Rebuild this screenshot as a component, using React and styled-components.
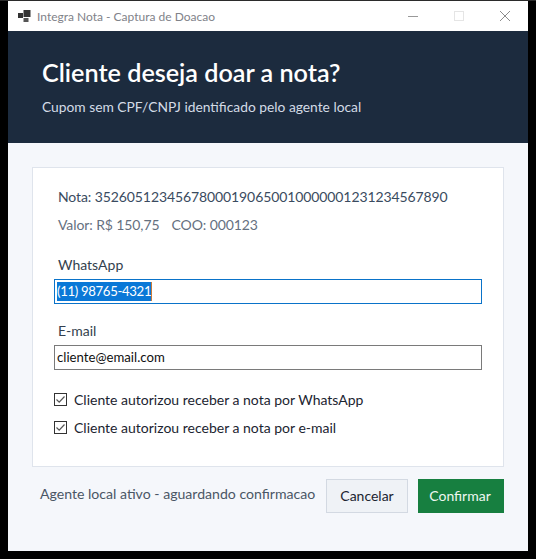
import React from 'react';
import styled, { createGlobalStyle } from 'styled-components';

const GlobalStyle = createGlobalStyle`
  html, body {
    margin: 0;
    padding: 0;
    background: #000;
  }
  body {
    font-family: Lato, "Noto Sans", sans-serif;
  }
`;

const Backdrop = styled.div`
  width: 536px;
  height: 559px;
  box-sizing: border-box;
  padding: 0 8px 8px;
  background: #000;
  border-top: 1px solid #2b2b2b;
  overflow: hidden;
`;

const Win = styled.div`
  width: 520px;
  height: 550px;
  display: flex;
  flex-direction: column;
  background: #f5f7fb;
`;

const TitleBar = styled.div`
  height: 30px;
  flex: none;
  display: flex;
  align-items: center;
  padding-left: 10px;
  background: #fff;
`;

const AppIcon = styled.svg`
  width: 13px;
  height: 12px;
  margin-right: 6px;
`;

const AppTitle = styled.span`
  flex: 1;
  font-size: 12px;
  color: #7f8289;
`;

const WinButton = styled.div`
  width: 46px;
  height: 30px;
  display: flex;
  align-items: center;
  justify-content: center;
`;

const Header = styled.header`
  height: 112px;
  flex: none;
  box-sizing: border-box;
  padding: 25px 34px 0;
  background: #1c2b3e;
`;

const Title = styled.h1`
  margin: 0;
  font-size: 25.2px;
  line-height: 32px;
  font-weight: 600;
  color: #fff;
`;

const Subtitle = styled.p`
  margin: 10px 0 0;
  font-size: 13.8px;
  line-height: 18px;
  color: #d3dbe6;
`;

const Body = styled.main`
  flex: 1;
  box-sizing: border-box;
  padding: 24px 24px 0;
`;

const Card = styled.section`
  height: 300px;
  box-sizing: border-box;
  padding: 20px 21px 0;
  background: #fff;
  border: 1px solid #dfe4ec;
`;

const NoteLine = styled.div`
  padding-left: 4px;
  font-size: 14px;
  letter-spacing: -0.1px;
  line-height: 18px;
  color: #3a4b60;
  white-space: nowrap;
`;

const ValueLine = styled(NoteLine)`
  margin-top: 10px;
  color: #65707f;
`;

const Coo = styled.span`
  margin-left: 12px;
`;

const FieldLabel = styled.label`
  display: block;
  margin-top: ${(p) => p.$gap}px;
  padding-left: 4px;
  font-size: 14px;
  line-height: 18px;
  color: #333f4e;
`;

const Field = styled.div`
  width: 428px;
  height: 25px;
  margin-top: 5px;
  box-sizing: border-box;
  display: flex;
  align-items: center;
  padding: 0 0 1px 2px;
  background: #fff;
  border: 1px solid ${(p) => (p.$focused ? '#0a73c9' : '#7a7a7a')};
  font-size: 13.2px;
  color: #111;
`;

const Selected = styled.span`
  height: 19px;
  line-height: 19px;
  letter-spacing: -0.35px;
  background: #0a78d7;
  color: #fff;
  box-shadow: 1px 0 0 #c77a3a;
`;

const Checks = styled.div`
  display: flex;
  flex-direction: column;
  gap: 10px;
  margin-top: 20px;
`;

const CheckRow = styled.label`
  display: flex;
  align-items: center;
  gap: 7px;
  height: 18px;
  font-size: 14px;
  color: #1b2430;
`;

const Box = styled.svg`
  width: 13px;
  height: 13px;
  flex: none;
`;

const Footer = styled.footer`
  display: flex;
  align-items: center;
  height: 34px;
  margin-top: 12px;
`;

const Status = styled.span`
  flex: 1;
  padding-left: 8px;
  margin-top: -6px;
  font-size: 14.1px;
  color: #4a5665;
  white-space: nowrap;
`;

const CancelButton = styled.button`
  width: 82px;
  height: 34px;
  padding: 0 0 2px;
  font: inherit;
  font-size: 14px;
  color: #1b2430;
  background: #eff2f6;
  border: 1px solid #d3d9e2;
`;

const ConfirmButton = styled(CancelButton)`
  width: 86px;
  margin-left: 10px;
  padding-right: 2px;
  color: #eef7f0;
  background: #177f40;
  border: none;
`;

const Check = () => (
  <Box viewBox="0 0 13 13">
    <rect x="0.5" y="0.5" width="12" height="12" fill="#fff" stroke="#333" />
    <path d="M2.5 6.5 L5.2 9.2 L10.5 3.5" fill="none" stroke="#555" strokeWidth="1.2" />
  </Box>
);

const App = () => (
  <>
    <GlobalStyle />
    <Backdrop>
      <Win>
        <TitleBar>
          <AppIcon viewBox="0 0 13 12">
            <rect x="0" y="3" width="5" height="5" fill="#333" />
            <rect x="5.5" y="0" width="7" height="7" fill="#333" />
            <rect x="5.5" y="8" width="5" height="4" fill="#555" />
          </AppIcon>
          <AppTitle>Integra Nota - Captura de Doacao</AppTitle>
          <WinButton>
            <svg width="10" height="10" viewBox="0 0 10 10">
              <path d="M0 5.5 H10" stroke="#999" />
            </svg>
          </WinButton>
          <WinButton>
            <svg width="10" height="10" viewBox="0 0 10 10">
              <rect x="0.5" y="0.5" width="9" height="9" fill="none" stroke="#e5e5e5" />
            </svg>
          </WinButton>
          <WinButton>
            <svg width="10" height="10" viewBox="0 0 10 10">
              <path d="M0 0 L10 10 M10 0 L0 10" stroke="#8c8c8c" />
            </svg>
          </WinButton>
        </TitleBar>
        <Header>
          <Title>Cliente deseja doar a nota?</Title>
          <Subtitle>Cupom sem CPF/CNPJ identificado pelo agente local</Subtitle>
        </Header>
        <Body>
          <Card>
            <NoteLine>Nota: 35260512345678000190650010000001231234567890</NoteLine>
            <ValueLine>
              Valor: R$ 150,75<Coo>COO: 000123</Coo>
            </ValueLine>
            <FieldLabel $gap={22}>WhatsApp</FieldLabel>
            <Field $focused>
              <Selected>(11) 98765-4321</Selected>
            </Field>
            <FieldLabel $gap={18}>E-mail</FieldLabel>
            <Field>cliente@email.com</Field>
            <Checks>
              <CheckRow>
                <Check />
                Cliente autorizou receber a nota por WhatsApp
              </CheckRow>
              <CheckRow>
                <Check />
                Cliente autorizou receber a nota por e-mail
              </CheckRow>
            </Checks>
          </Card>
          <Footer>
            <Status>Agente local ativo - aguardando confirmacao</Status>
            <CancelButton>Cancelar</CancelButton>
            <ConfirmButton>Confirmar</ConfirmButton>
          </Footer>
        </Body>
      </Win>
    </Backdrop>
  </>
);

export default App;
